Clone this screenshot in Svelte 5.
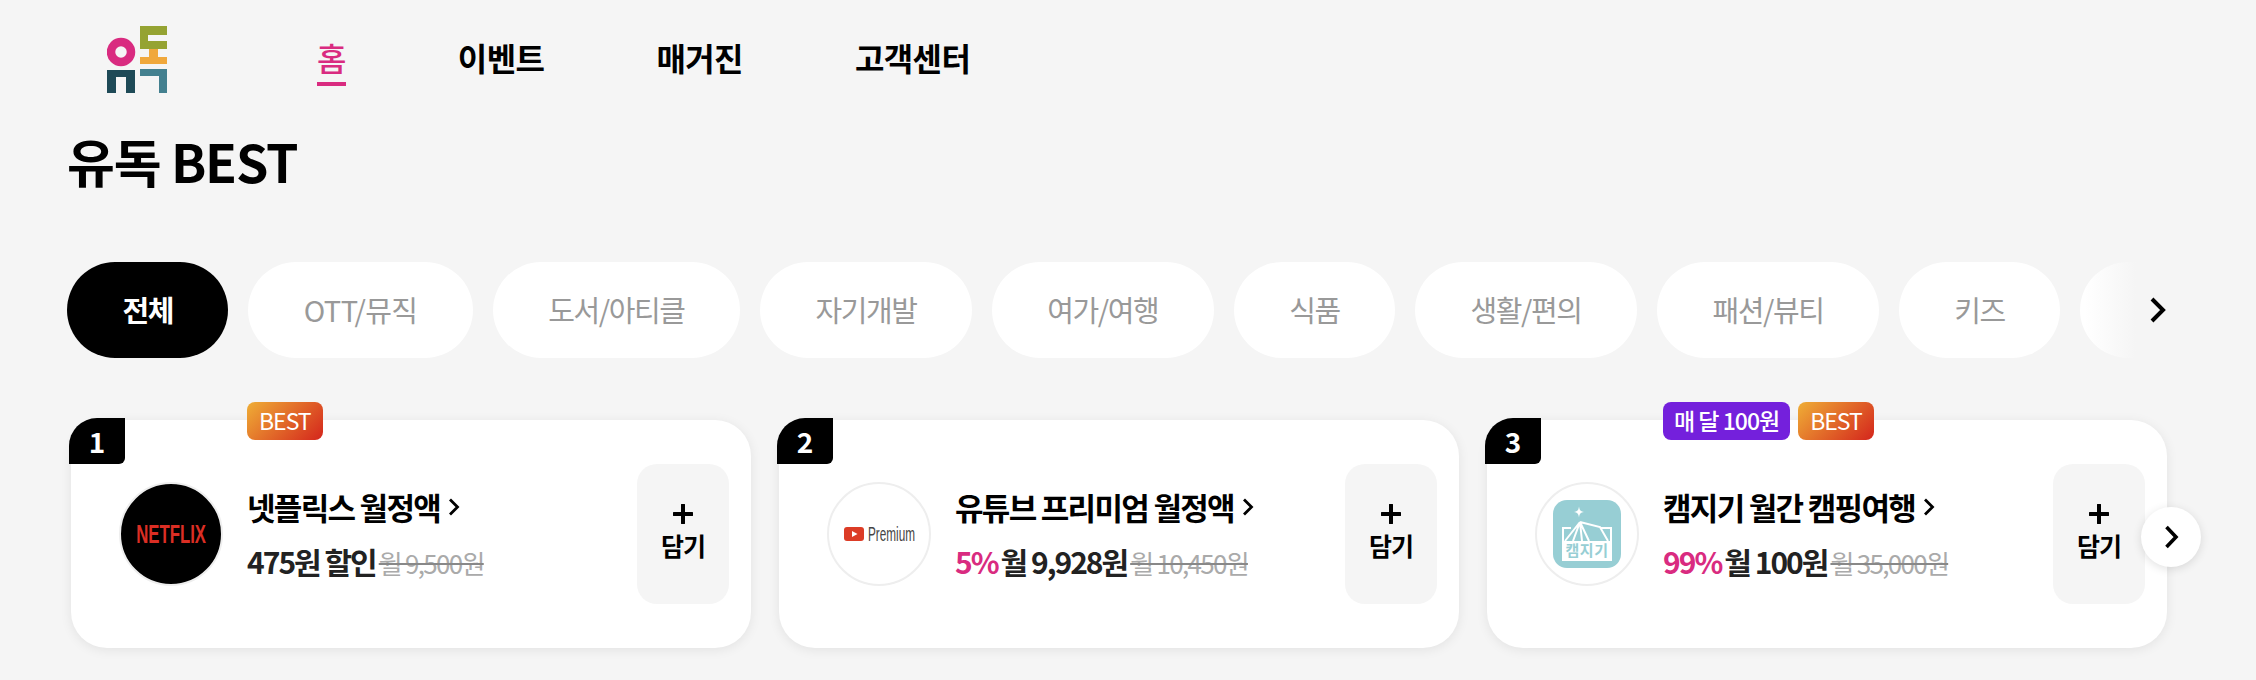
<script>
  const menus = ["홈", "이벤트", "매거진", "고객센터"];
  const tabs = ["전체", "OTT/뮤직", "도서/아티클", "자기개발", "여가/여행", "식품", "생활/편의", "패션/뷰티", "키즈", ""];
  const items = [
    { rank: 1, name: "넷플릭스 월정액", logo: "netflix", off: "", price: "475원 할인", was: "월 9,500원", tags: ["BEST"] },
    { rank: 2, name: "유튜브 프리미엄 월정액", logo: "youtube", off: "5%", price: "월 9,928원", was: "월 10,450원", tags: [] },
    { rank: 3, name: "캠지기 월간 캠핑여행", logo: "camp", off: "99%", price: "월 100원", was: "월 35,000원", tags: ["매 달 100원", "BEST"] }
  ];
</script>

<div class="page">
  <header class="header">
    <svg class="logo" width="60" height="67" viewBox="0 0 60 67" aria-label="유독">
      <circle cx="14" cy="26" r="10" fill="none" stroke="#d92b80" stroke-width="8.5" />
      <path d="M0 44h28v23h-9V51h-10v16H0z" fill="#1e4a57" />
      <path d="M33 0h27v9H41v6h19v8H33z" fill="#95a332" />
      <path d="M42 23h9v8h9v7H33v-7h9z" fill="#f0a83c" />
      <path d="M33 43h27v24h-8V50H33z" fill="#43808f" />
    </svg>
    <nav class="nav">
      {#each menus as menu, i}
        <a class="menu" class:active={i === 0} href="#top">{menu}</a>
      {/each}
    </nav>
  </header>

  <h1 class="title">유독 BEST</h1>

  <div class="tabs">
    {#each tabs as tab, i}
      <button class="tab" class:on={i === 0}>{tab}</button>
    {/each}
    <div class="tabs-fade">
      <svg width="18" height="26" viewBox="0 0 18 26"><path d="M3 2l11 11L3 24" fill="none" stroke="#000" stroke-width="4" /></svg>
    </div>
  </div>

  <div class="shelf">
    {#each items as item}
      <article class="card">
        <span class="rank">{item.rank}</span>
        {#if item.tags.length}
          <div class="tags">
            {#each item.tags as tag}
              <span class="tag" class:best={tag === "BEST"}>{tag}</span>
            {/each}
          </div>
        {/if}
        <div class="thumb" class:dark={item.logo === "netflix"}>
          {#if item.logo === "netflix"}
            <span class="nf">NETFLIX</span>
          {:else if item.logo === "youtube"}
            <div class="yt">
              <svg width="20" height="14" viewBox="0 0 20 14">
                <rect width="20" height="14" rx="3" fill="#dc3c26" />
                <path d="M8 4l5.500 3L8 10z" fill="#fff" />
              </svg>
              <span class="yt-word">Premium</span>
            </div>
          {:else}
            <svg width="68" height="68" viewBox="0 0 68 68">
              <rect width="68" height="68" rx="14" fill="#97ced4" />
              <path d="M26 6.500c.6 4 1.500 4.900 5 5.500-3.500.6-4.400 1.500-5 5.500-.6-4-1.500-4.900-5-5.500 3.500-.6 4.400-1.500 5-5.500z" fill="#fff" />
              <path d="M9 28h9M48 28h11M10 27v33h48V27M27 22L12 41M27 22l-7 19M27 22l2 19M27 22l9 19M27 22l20 5 8 14" fill="none" stroke="#fff" stroke-width="2" />
              <rect x="9" y="41" width="50" height="19" fill="#fff" />
              <text x="34" y="56" text-anchor="middle" class="cp">캠지기</text>
            </svg>
          {/if}
        </div>
        <div class="info">
          <div class="name">
            {item.name}
            <svg class="go" width="12" height="18" viewBox="0 0 12 18"><path d="M2 1.500L9.500 9 2 16.500" fill="none" stroke="#000" stroke-width="2.800" /></svg>
          </div>
          <div class="price">
            {#if item.off}<span class="off">{item.off}</span>{/if}
            <span>{item.price}</span>
            <s class="was">{item.was}</s>
          </div>
        </div>
        <button class="add">
          <svg width="20" height="20" viewBox="0 0 20 20"><path d="M10 1v18M1 10h18" stroke="#000" stroke-width="4" stroke-linecap="round" /></svg>
          <span>담기</span>
        </button>
      </article>
    {/each}
    <button class="next" aria-label="다음">
      <svg width="15" height="24" viewBox="0 0 15 24"><path d="M2.500 2l9.500 10-9.500 10" fill="none" stroke="#000" stroke-width="3.600" /></svg>
    </button>
  </div>
</div>

<style>
  :global(body) {
    margin: 0;
    background: #f5f5f5;
    overflow: hidden;
  }
  .page {
    width: 2256px;
    height: 680px;
    overflow: hidden;
    position: relative;
    background: #f5f5f5;
    font-family: "Noto Sans CJK KR", "Noto Sans", sans-serif;
    color: #000;
  }
  .header {
    display: flex;
    align-items: flex-start;
    height: 122px;
    padding: 26px 0 0 107px;
    box-sizing: border-box;
  }
  .logo { flex: none; }
  .nav {
    display: flex;
    gap: 112px;
    margin-left: 150px;
    margin-top: 9px;
  }
  .menu {
    font-size: 32px;
    font-weight: 700;
    line-height: 44px;
    height: 47px;
    letter-spacing: -0.6px;
    color: #000;
    text-decoration: none;
  }
  .menu.active {
    color: #d92b80;
    font-weight: 500;
    border-bottom: 4px solid #d92b80;
  }
  .title {
    margin: 0 0 0 67px;
    height: 140px;
    font-size: 52px;
    line-height: 78px;
    font-weight: 700;
    letter-spacing: -1.2px;
  }
  .tabs {
    display: flex;
    gap: 20px;
    height: 96px;
    margin-left: 67px;
    width: 2110px;
    overflow: hidden;
    position: relative;
  }
  .tab {
    flex: none;
    height: 96px;
    min-width: 160px;
    padding: 0 55.400px 2px;
    border: 0;
    border-radius: 48px;
    background: #fff;
    color: #999;
    font: 400 29px/40px "Noto Sans CJK KR", sans-serif;
    letter-spacing: -1.4px;
  }
  .tab:nth-child(2) {
    letter-spacing: -0.6px;
  }
  .tab.on {
    background: #000;
    color: #fff;
    font-weight: 700;
  }
  .tabs-fade {
    position: absolute;
    right: 0;
    top: 0;
    bottom: 0;
    width: 92px;
    display: flex;
    align-items: center;
    justify-content: flex-end;
    padding-right: 10px;
    box-sizing: border-box;
    background: linear-gradient(90deg, rgba(245, 245, 245, 0), #f5f5f5 55%);
  }
  .shelf {
    display: flex;
    gap: 28px;
    margin: 62px 0 0 71px;
    position: relative;
  }
  .card {
    flex: none;
    width: 680px;
    height: 228px;
    box-sizing: border-box;
    padding: 44px 22px 44px 48px;
    display: flex;
    align-items: center;
    background: #fff;
    border-radius: 36px;
    box-shadow: 0 2px 12px rgba(0, 0, 0, 0.08);
    position: relative;
  }
  .rank {
    position: absolute;
    left: -2px;
    top: -2px;
    width: 56px;
    height: 46px;
    background: #000;
    color: #fff;
    border-radius: 28px 0 6px 0;
    font-size: 28px;
    font-weight: 700;
    line-height: 46px;
    text-align: center;
  }
  .tags {
    position: absolute;
    left: 176px;
    top: -18px;
    display: flex;
    gap: 8px;
  }
  .tag {
    height: 38px;
    padding: 0 11px;
    border-radius: 8px;
    background: #7420dc;
    color: #fff;
    font-size: 23px;
    line-height: 37px;
    font-weight: 500;
    letter-spacing: -1px;
  }
  .tag.best {
    padding: 0 12px;
    background: linear-gradient(135deg, #efae36, #d4251c);
    font-weight: 400;
  }
  .thumb {
    flex: none;
    width: 104px;
    height: 104px;
    box-sizing: border-box;
    border: 2px solid #eee;
    border-radius: 50%;
    background: #fff;
    display: flex;
    align-items: center;
    justify-content: center;
  }
  .thumb.dark {
    background: #000;
  }
  .nf {
    flex: none;
    font: 700 25px/28px "Liberation Sans", sans-serif;
    color: #db2e24;
    transform: scaleX(0.67);
  }
  .yt {
    display: flex;
    align-items: center;
    gap: 4px;
    width: 71px;
    flex: none;
  }
  .yt svg { flex: none; }
  .yt-word {
    flex: none;
    font: 400 21px/24px "Liberation Sans", sans-serif;
    color: #444;
    transform: scaleX(0.56);
    transform-origin: left center;
    margin-right: -37px;
  }
  .cp {
    font: 700 15px "Noto Sans CJK KR", sans-serif;
    letter-spacing: 0.5px;
    fill: #97ced4;
  }
  .info {
    flex: 1;
    margin-left: 24px;
    display: flex;
    flex-direction: column;
    gap: 14px;
    padding-top: 1px;
  }
  .name {
    font-size: 31px;
    font-weight: 700;
    line-height: 40px;
    letter-spacing: -1.7px;
    display: flex;
    align-items: center;
    gap: 8px;
  }
  .go { flex: none; }
  .price {
    display: flex;
    align-items: baseline;
    gap: 3px;
    font-size: 30px;
    line-height: 40px;
    font-weight: 700;
    letter-spacing: -2px;
    color: #222;
  }
  .off {
    color: #d92b80;
  }
  .was {
    font-size: 26px;
    font-weight: 400;
    color: #aaa;
    letter-spacing: -1.700px;
    text-decoration-color: #888;
  }
  .add {
    flex: none;
    width: 92px;
    height: 140px;
    border: 0;
    border-radius: 20px;
    background: #f5f5f5;
    display: flex;
    flex-direction: column;
    align-items: center;
    justify-content: flex-start;
    gap: 3px;
    color: #000;
    font: 700 25px/36px "Noto Sans CJK KR", sans-serif;
    letter-spacing: -1px;
    padding: 40px 0 0;
  }
  .next {
    position: absolute;
    left: 2070px;
    top: 87px;
    width: 60px;
    height: 60px;
    border: 0;
    border-radius: 50%;
    background: #fff;
    box-shadow: 0 2px 10px rgba(0, 0, 0, 0.12);
    display: flex;
    align-items: center;
    justify-content: center;
    padding: 0;
  }
</style>
